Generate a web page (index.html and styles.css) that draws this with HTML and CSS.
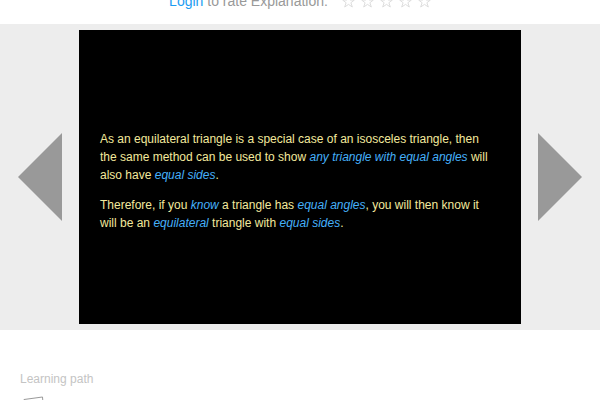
FILE: index.html
```
<!DOCTYPE html>
<html lang="en">
<head>
<meta charset="utf-8">
<title>Explanation</title>
<link rel="stylesheet" href="styles.css">
</head>
<body>
<svg class="symbols" aria-hidden="true">
  <symbol id="star" viewBox="0 0 13 13"><path d="M6.500 .9 L8 5 L12.300 5.100 L8.900 7.700 L10.300 12 L6.500 9.400 L2.700 12 L4.100 7.700 L.7 5.100 L5 5 Z"/></symbol>
</svg>
<div class="rating">
  <span><a href="#login">Login</a> to rate Explanation:</span>
  <div class="stars">
    <button type="button" aria-label="1 star"><svg><use href="#star"/></svg></button>
    <button type="button" aria-label="2 stars"><svg><use href="#star"/></svg></button>
    <button type="button" aria-label="3 stars"><svg><use href="#star"/></svg></button>
    <button type="button" aria-label="4 stars"><svg><use href="#star"/></svg></button>
    <button type="button" aria-label="5 stars"><svg><use href="#star"/></svg></button>
  </div>
</div>
<main class="viewer">
  <button class="arrow" type="button" aria-label="Previous"><svg viewBox="0 0 44 88"><path d="M44 0V88L0 44Z"/></svg></button>
  <article class="slide">
    <p>As an equilateral triangle is a special case of an isosceles triangle, then the same method can be used to show <em>any triangle with equal angles</em> will also have <em>equal sides</em>.</p>
    <p>Therefore, if you <em>know</em> a triangle has <em>equal angles</em>, you will then know it will be an <em>equilateral</em> triangle with <em>equal sides</em>.</p>
  </article>
  <button class="arrow" type="button" aria-label="Next"><svg viewBox="0 0 44 88"><path d="M0 0V88L44 44Z"/></svg></button>
</main>
<section class="path">
  <h2>Learning path</h2>
  <svg class="page-icon" viewBox="0 0 24 24" aria-hidden="true"><path d="M4 3.500L22.500 1L24 20L6 23Z"/></svg>
</section>
</body>
</html>
```
FILE: styles.css
```
body {
  margin: 0;
  background: #fff;
  font-family: "Liberation Sans", Arial, sans-serif;
  overflow: hidden;
}

button {
  display: block;
  margin: 0;
  padding: 0;
  border: 0;
  background: none;
  cursor: pointer;
}

svg {
  display: block;
}

.symbols {
  position: absolute;
  width: 0;
  height: 0;
}

/* The rating bar sits partly above the visible area. */
.rating {
  display: flex;
  justify-content: center;
  gap: 14px;
  margin-top: -9px;
  padding-bottom: 13px;
  color: #999;
  font-size: 14px;
  line-height: 20px;
}

.rating a {
  color: #1c9cf2;
  text-decoration: none;
}

.stars {
  display: flex;
  align-items: center;
  gap: 6px;
}

.stars svg {
  width: 13px;
  height: 13px;
  fill: none;
  stroke: #ddd;
  stroke-width: 1;
}

.viewer {
  display: flex;
  justify-content: space-between;
  align-items: center;
  padding: 6px 18px;
  background: #ededed;
}

.arrow svg {
  width: 44px;
  height: 88px;
  fill: #999;
}

.slide {
  box-sizing: border-box;
  width: 442px;
  padding: 100px 24px 92px 21px;
  background: #000;
  color: #f3e99d;
  font-size: 12px;
  line-height: 18px;
}

.slide p {
  margin: 0;
}

.slide p + p {
  margin-top: 12px;
}

.slide em {
  color: #45b0fa;
}

.path {
  padding: 40px 20px 0;
}

.path h2 {
  margin: 0 0 8px;
  color: #c4c4c4;
  font-size: 12px;
  font-weight: normal;
  line-height: 18px;
}

.page-icon {
  width: 24px;
  height: 24px;
  fill: none;
  stroke: #999;
  stroke-width: 1;
}
```
